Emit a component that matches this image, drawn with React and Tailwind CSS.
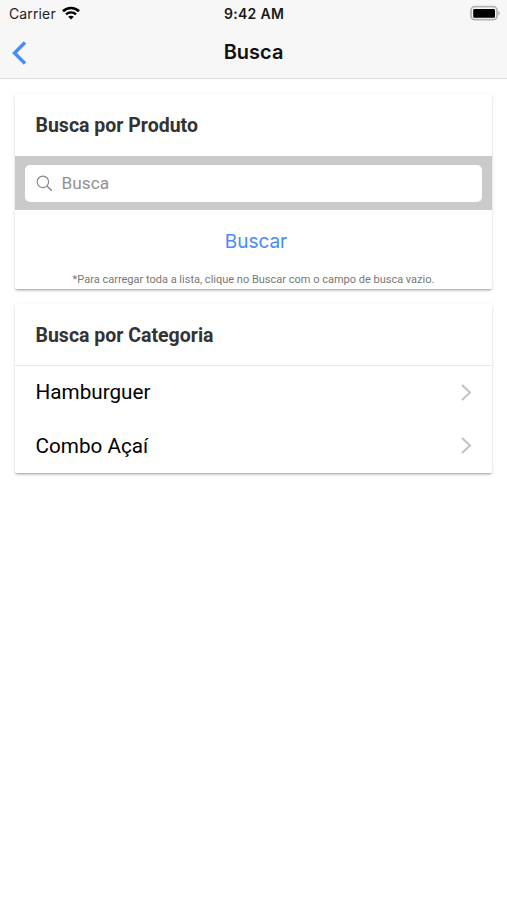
import React, { useState } from 'react';

const categories = [
  { id: 1, name: 'Hamburguer' },
  { id: 2, name: 'Combo Açaí' },
];

function StatusBar() {
  return (
    <div className="flex h-[26px] items-center justify-between pl-[9px] pr-[7px] font-['Inter',sans-serif] text-[14px] text-[#222]">
      <div className="flex flex-1 items-center gap-[6px]">
        <span className="tracking-[0.13px]">Carrier</span>
        <svg width="18" height="14" viewBox="0 0 18 14" fill="none" stroke="#000" strokeWidth="2.6">
          <path d="M1 5.2C5.4 .9 12.6 .9 17 5.2" />
          <path d="M4 8.3c2.8-2.6 7.2-2.6 10 0" strokeWidth="2.4" />
          <path d="M9 13.6L6.2 10.8c1.6-1.4 4-1.4 5.6 0z" fill="#000" stroke="none" />
        </svg>
      </div>
      <span className="-ml-px font-semibold tracking-[0.3px] text-[#1a1a1a]">9:42 AM</span>
      <div className="flex flex-1 justify-end">
        <svg width="30" height="16" viewBox="0 0 30 16">
          <rect x="1" y="1.7" width="26" height="13" rx="3.6" fill="#f7f7f7" stroke="#b4b4b4" strokeWidth="1.7" />
          <rect x="3.2" y="3.9" width="21.8" height="8.8" rx="1.2" fill="#000" />
          <path d="M28.3 5.9c2 .8 2 3.8 0 4.6z" fill="#b4b4b4" />
        </svg>
      </div>
    </div>
  );
}

function Header() {
  return (
    <header className="border-b border-[#dadada] bg-[#f7f7f7]">
      <StatusBar />
      <div className="grid h-[52px] grid-cols-3 items-center">
        <button type="button" className="pl-[11px] pt-px" aria-label="Voltar">
          <svg width="16" height="24" viewBox="0 0 16 24" fill="none" stroke="#488aff" strokeWidth="3.4">
            <path d="M14 1.5L3.5 12L14 22.5" />
          </svg>
        </button>
        <h1 className="text-center font-['Inter',sans-serif] text-[20px] font-semibold text-[#111]">
          Busca
        </h1>
      </div>
    </header>
  );
}

function Card({ title, children }) {
  return (
    <section className="overflow-hidden rounded-[2px] bg-white shadow-[0_2px_2px_0_rgba(0,0,0,0.14),0_3px_1px_-2px_rgba(0,0,0,0.12),0_1px_5px_0_rgba(0,0,0,0.08)]">
      <h2 className="flex h-[62px] items-center pl-[20.5px] pt-[2px] text-[19.5px] font-bold text-[#333]">{title}</h2>
      {children}
    </section>
  );
}

function App() {
  const [search, setSearch] = useState('');

  return (
    <div className="min-h-screen bg-white font-['Roboto',sans-serif]">
      <Header />
      <main className="flex flex-col gap-[15px] px-[15px] pt-[15px]">
        <Card title="Busca por Produto">
          <div className="flex h-[54px] items-center bg-[#cacaca] px-[10px]">
            <label className="flex h-[37px] w-full items-center gap-[9px] rounded-[5px] bg-white pl-[10.5px]">
              <svg width="18" height="18" viewBox="0 0 18 18" fill="none" stroke="#8a8a8a" strokeWidth="1.3">
                <circle cx="7.3" cy="7.8" r="6.1" />
                <path d="M11.6 12.1L16.8 17.2" strokeWidth="1.6" />
              </svg>
              <input
                type="search"
                value={search}
                onChange={(e) => setSearch(e.target.value)}
                placeholder="Busca"
                className="w-full pt-px text-[17.3px] outline-none placeholder:text-[#929292]"
              />
            </label>
          </div>
          <button
            type="button"
            className="block h-[62px] w-full pl-[5px] pt-[2px] text-center font-['Inter',sans-serif] text-[19px] text-[#488aff]"
          >
            Buscar
          </button>
          <p className="h-[17px] text-center text-[11px] leading-[16px] text-[#777]">
            *Para carregar toda a lista, clique no Buscar com o campo de busca vazio.
          </p>
        </Card>

        <Card title="Busca por Categoria">
          <ul className="-mt-px border-t border-[#e6e6e6]">
            {categories.map((category) => (
              <li key={category.id} className="flex h-[53.5px] items-center justify-between px-[20.5px] text-[20.7px] text-black">
                <span>{category.name}</span>
                <svg width="12" height="18" viewBox="0 0 12 18" fill="none" stroke="#c4c4c4" strokeWidth="2.2">
                  <path d="M2 1L10 8.5L2 16" />
                </svg>
              </li>
            ))}
          </ul>
        </Card>
      </main>
    </div>
  );
}

export default App;
